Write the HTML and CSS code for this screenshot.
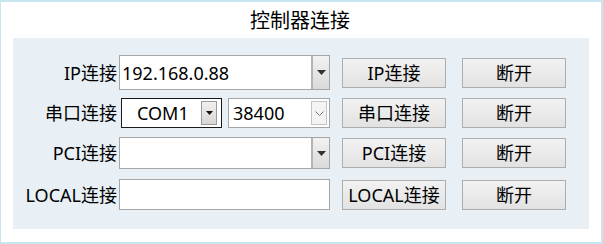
FILE: index.html
```html
<!DOCTYPE html>
<html>
<head>
<meta charset="utf-8">
<link rel="stylesheet" href="styles.css">
</head>
<body>
<div class="frame">
  <div class="title">控制器连接</div>
  <div class="panel">
    <div class="row row-ip">
      <div class="label">IP连接</div>
      <div class="combo edit">
        <span class="value">192.168.0.88</span>
        <span class="drop"><svg width="9" height="5" viewBox="0 0 9 5"><path d="M0 0H9L4.5 5Z" fill="#333"/></svg></span>
      </div>
      <div class="btn first">IP连接</div>
      <div class="btn second">断开</div>
    </div>
    <div class="row row-com">
      <div class="label">串口连接</div>
      <div class="combo list">
        <span class="value">COM1</span>
        <span class="drop"><svg width="7" height="4" viewBox="0 0 7 4"><path d="M0 0H7L3.5 4Z" fill="#111"/></svg></span>
      </div>
      <div class="combo baud">
        <span class="value">38400</span>
        <span class="drop"><svg width="9" height="5" viewBox="0 0 9 5"><path d="M0.5 0.5L4.5 4.5L8.5 0.5" fill="none" stroke="#777" stroke-width="1"/></svg></span>
      </div>
      <div class="btn first">串口连接</div>
      <div class="btn second">断开</div>
    </div>
    <div class="row row-pci">
      <div class="label">PCI连接</div>
      <div class="combo edit">
        <span class="value"></span>
        <span class="drop"><svg width="9" height="5" viewBox="0 0 9 5"><path d="M0 0H9L4.5 5Z" fill="#333"/></svg></span>
      </div>
      <div class="btn first">PCI连接</div>
      <div class="btn second">断开</div>
    </div>
    <div class="row row-local">
      <div class="label">LOCAL连接</div>
      <div class="textbox"></div>
      <div class="btn first">LOCAL连接</div>
      <div class="btn second">断开</div>
    </div>
  </div>
</div>
</body>
</html>
```

FILE: styles.css
```css
html, body {
  margin: 0;
  padding: 0;
  background: #ffffff;
}
body {
  font-family: "Noto Sans", "Noto Sans CJK SC", sans-serif;
  color: #000;
}
.frame {
  box-sizing: border-box;
  width: 603px;
  height: 244px;
  border-style: solid;
  border-color: #c8e6f2;
  border-width: 2px 2px 2px 1px;
  background: #fff;
}
.title {
  height: 36px;
  line-height: 38px;
  font-size: 20px;
  text-align: center;
  padding-right: 2px;
}
.panel {
  box-sizing: border-box;
  margin-left: 12px;
  width: 576px;
  height: 191px;
  padding-top: 17px;
  background: #e8f0f6;
  display: flex;
  flex-direction: column;
  gap: 8px;
}
.row {
  display: flex;
  align-items: center;
  font-size: 18px;
}
.row-ip { height: 35px; }
.row-com { height: 30px; }
.row-pci { height: 32px; margin-top: 1px; }
.row-local { height: 31px; margin-top: 2px; }
.label {
  width: 104px;
  text-align: right;
  line-height: 24px;
  white-space: nowrap;
}
.combo, .textbox {
  box-sizing: border-box;
  display: flex;
  align-items: stretch;
  background: #fff;
  border: 1px solid #a6a6a6;
  height: 100%;
}
.combo .value {
  flex: 1;
  display: flex;
  align-items: center;
  line-height: 24px;
  white-space: nowrap;
}
.edit, .textbox {
  margin-left: 2px;
  width: 211px;
}
.edit .value { padding-left: 2px; }
.edit .drop {
  width: 16px;
  border-left: 2px solid #b4b4b4;
  background: linear-gradient(#f2f2f2, #dadada);
  display: flex;
  align-items: center;
  justify-content: center;
}
.list {
  margin-left: 4px;
  width: 101px;
  border-color: #1a1a1a;
  padding: 2px 4px 2px 0;
}
.list .value { padding-left: 15px; }
.list .drop {
  width: 14px;
  border: 1px solid #9a9a9a;
  background: linear-gradient(#f0f0f0, #d6d6d6);
  display: flex;
  align-items: center;
  justify-content: center;
}
.baud {
  margin-left: 6px;
  width: 102px;
  padding: 2px 2px 2px 0;
}
.baud .value { padding-left: 4px; }
.baud .drop {
  width: 14px;
  border: 1px solid #c4c4c4;
  background: #f4f4f4;
  display: flex;
  align-items: center;
  justify-content: center;
}
.btn {
  box-sizing: border-box;
  width: 104px;
  height: 30px;
  border: 1px solid #adadad;
  background: linear-gradient(#f2f2f2, #e2e2e2);
  display: flex;
  align-items: center;
  justify-content: center;
  line-height: 24px;
  white-space: nowrap;
}
.btn.first { margin-left: 12px; }
.btn.second { margin-left: 16px; }
```
